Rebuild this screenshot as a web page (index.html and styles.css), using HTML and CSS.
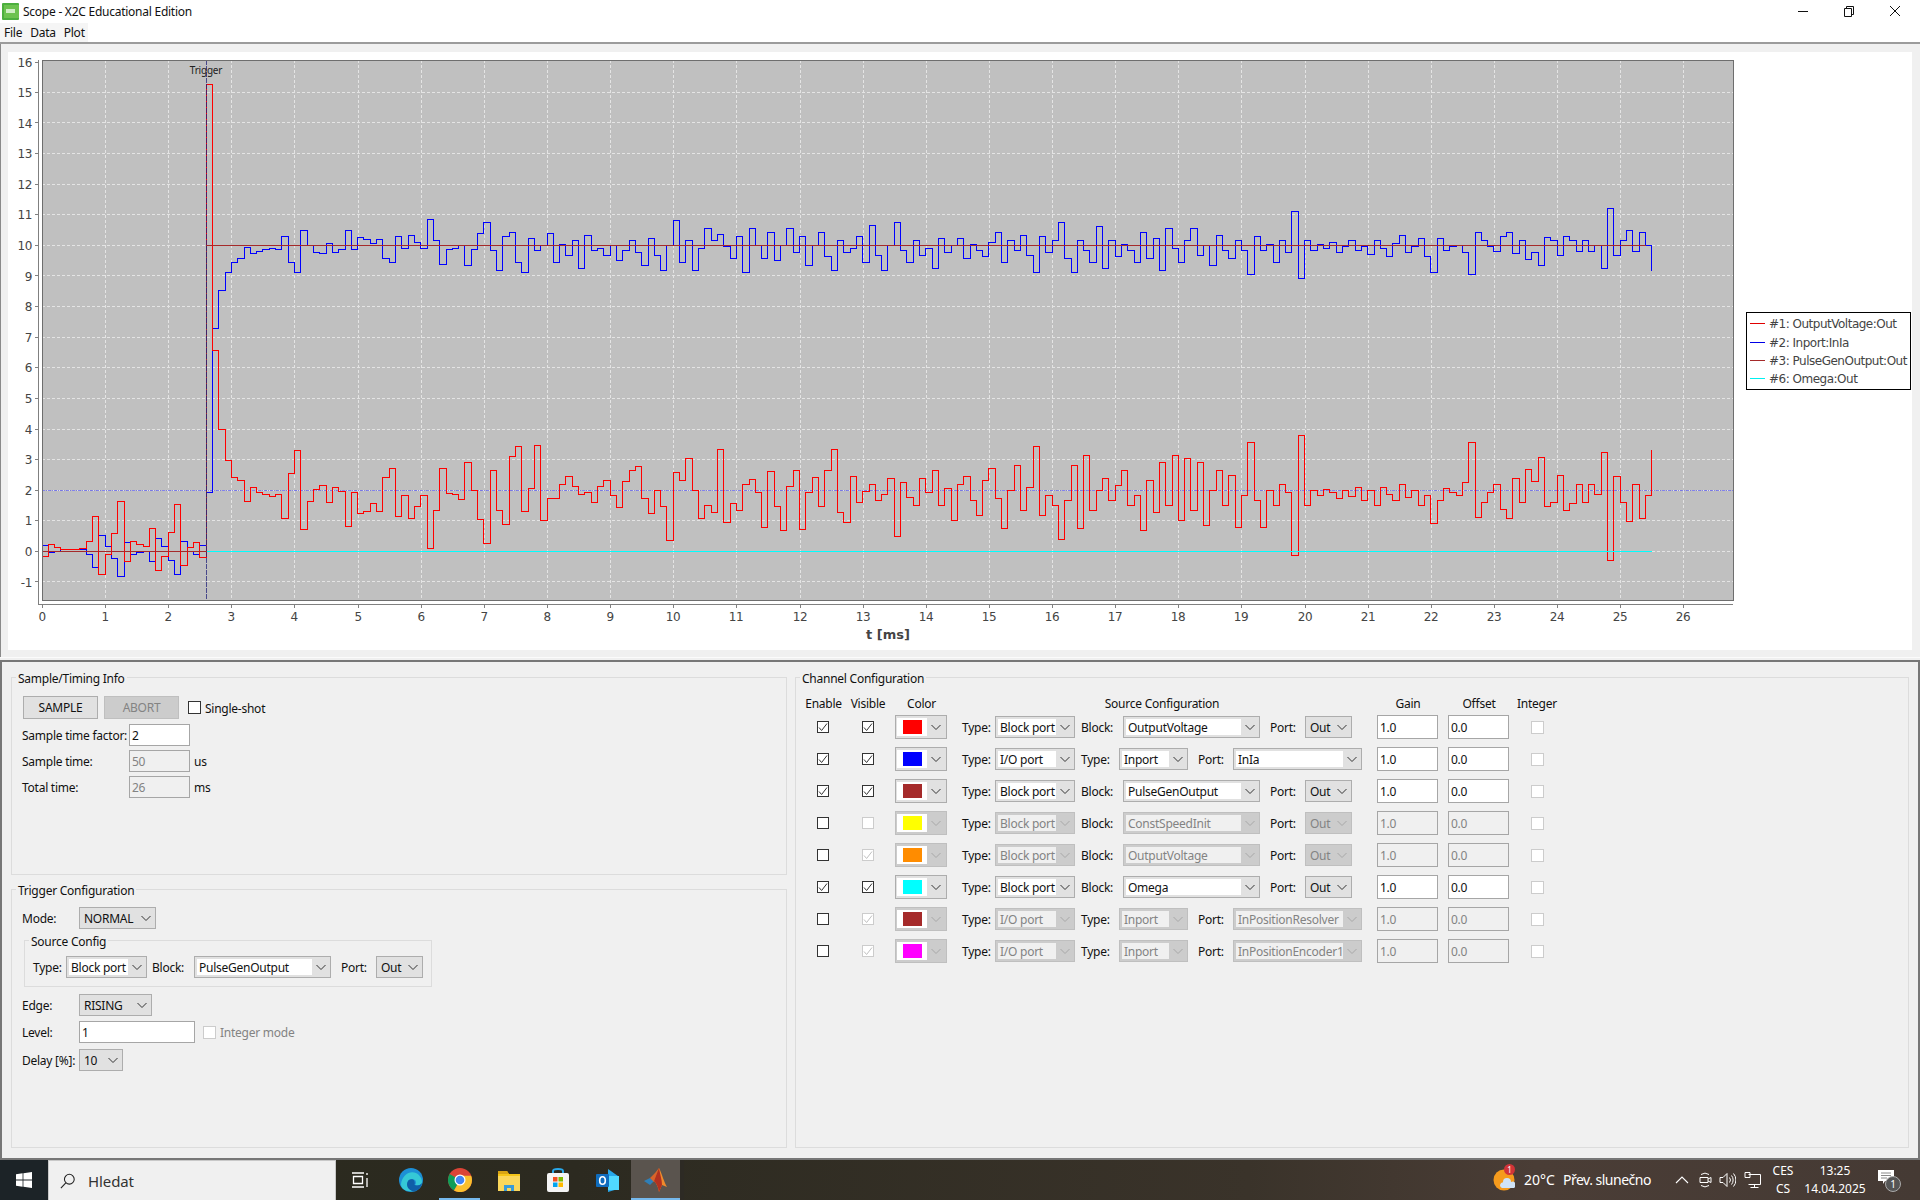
FILE: index.html
```html
<!DOCTYPE html>
<html lang="cs">
<head>
<meta charset="utf-8">
<title>Scope - X2C Educational Edition</title>
<link rel="stylesheet" href="styles.css">
</head>
<body>
<svg class="defs" width="0" height="0" aria-hidden="true">
  <symbol id="chev" viewBox="0 0 17 16"><path d="M4 6l4.5 4.5L13 6" fill="none" stroke="currentColor"/></symbol>
  <symbol id="tick" viewBox="0 0 12 12"><path d="M2 6.5l2.6 3L10 2.5" fill="none" stroke="currentColor"/></symbol>
</svg>
<div class="app">
  <header class="titlebar">
    <svg class="appicon" viewBox="0 0 17 17"><rect x="0" y="0" width="17" height="17" rx="1" fill="#4caf3e"/><rect x="2" y="2" width="15" height="13" fill="#6cc24f"/><rect x="4" y="6" width="9" height="4" fill="#cfeec4"/></svg>
    <span class="wintitle">Scope - X2C Educational Edition</span>
    <div class="wincontrols">
      <svg class="winbtn" viewBox="0 0 46 20"><path d="M18 10.5h10" stroke="#111" fill="none"/></svg>
      <svg class="winbtn" viewBox="0 0 46 20"><path d="M18.5 7.5h7v8h-7zM20.5 7V5.5h7v8H26" stroke="#111" fill="none"/></svg>
      <svg class="winbtn" viewBox="0 0 46 20"><path d="M18 5l10 10M28 5L18 15" stroke="#111" fill="none"/></svg>
    </div>
  </header>
  <nav class="menubar"><div class="menus"><span>File</span><span>Data</span><span>Plot</span></div></nav>
  <section class="plotpane">
    <svg class="plot" viewBox="8 52 1904 598" width="1904" height="598">
      <rect class="plotbg" x="42" y="60" width="1691" height="540"/>
      <path class="grid" d="M105.5 60V600M168.5 60V600M231.5 60V600M294.5 60V600M358.5 60V600M421.5 60V600M484.5 60V600M547.5 60V600M610.5 60V600M673.5 60V600M736.5 60V600M800.5 60V600M863.5 60V600M926.5 60V600M989.5 60V600M1052.5 60V600M1115.5 60V600M1178.5 60V600M1241.5 60V600M1305.5 60V600M1368.5 60V600M1431.5 60V600M1494.5 60V600M1557.5 60V600M1620.5 60V600M1683.5 60V600"/>
      <path class="grid" d="M42 92.5H1733M42 122.5H1733M42 153.5H1733M42 184.5H1733M42 214.5H1733M42 245.5H1733M42 275.5H1733M42 306.5H1733M42 337.5H1733M42 367.5H1733M42 398.5H1733M42 429.5H1733M42 459.5H1733M42 490.5H1733M42 520.5H1733M42 551.5H1733M42 581.5H1733"/>
      <path class="level" d="M42 490.5H1733"/>
      <g transform="translate(42 0) scale(6.313 1)">
        <path class="trace blue" d="M0 545h1V552h1V551h1V549h4V554h1V567h1V535h1V546h1V558h1V576h1V542h1V554h1V552h1V551h1V561h1V538h1V546h1V560h1V574h1V541h1V551h1V554h1V545h1V492h1V328h1V290h1V272h1V262h1V258h1V247h1V253h1V251h1V249h1V248h1V249h1V236h1V262h1V272h1V230h1V245h1V252h1V253h1V243h1V252h1V249h1V230h1V249h1V237h1V239h1V243h1V239h1V258h1V262h1V236h1V248h1V235h1V242h1V248h1V219h1V240h1V264h1V249h1V248h1V245h1V265h1V249h1V233h1V222h1V250h1V270h1V236h1V232h1V262h1V272h1V238h1V250h1V245h1V233h1V262h1V244h1V255h1V240h1V268h1V235h1V250h1V248h1V255h1V245h1V260h1V250h1V240h1V252h1V265h1V238h1V255h1V270h1V245h1V220h1V262h1V240h1V270h1V248h1V228h1V240h1V234h1V246h1V258h1V236h1V272h1V228h1V245h1V258h1V232h1V260h1V245h1V228h1V252h1V236h1V265h1V245h1V232h1V256h1V270h1V240h1V252h1V248h1V236h1V262h1V225h1V255h1V270h1V245h1V222h1V250h1V262h1V240h1V255h1V248h1V268h1V238h1V252h1V245h1V238h1V258h1V244h1V250h1V256h1V242h1V232h1V262h1V240h1V250h1V235h1V255h1V272h1V236h1V252h1V240h1V222h1V258h1V272h1V240h1V250h1V262h1V226h1V268h1V240h1V256h1V244h1V250h1V262h1V232h1V258h1V238h1V270h1V228h1V248h1V262h1V240h1V228h1V255h1V245h1V265h1V235h1V250h1V258h1V240h1V250h1V274h1V236h1V250h1V244h1V262h1V240h1V252h1V211h1V278h1V240h1V250h1V244h1V248h1V242h1V252h1V246h1V240h1V250h1V246h1V254h1V240h1V248h1V256h1V243h1V235h1V252h1V246h1V238h1V256h1V272h1V238h1V250h1V246h1V245h1V252h1V274h1V232h1V240h1V246h1V251h1V236h1V232h1V253h1V240h1V259h1V252h1V265h1V237h1V240h1V255h1V236h1V240h1V251h1V240h1V251h1V245h1V268h1V208h1V255h1V240h1V230h1V251h1V232h1V245h1V271"/>
        <path class="trace red" d="M0 556h1V544h1V547h1V549h3V548h1V541h1V516h1V574h1V554h1V533h1V501h1V561h1V541h1V544h1V546h1V528h1V570h1V556h1V532h1V504h1V565h1V547h1V542h1V557h1V84h1V350h1V429h1V460h1V477h1V480h1V501h1V487h1V492h1V494h1V496h1V494h1V518h1V473h1V450h1V529h1V501h1V489h1V485h1V502h1V487h1V491h1V526h1V492h1V513h1V511h1V503h1V511h1V477h1V468h1V516h1V495h1V518h1V506h1V495h1V548h1V510h1V468h1V493h1V494h1V499h1V462h1V490h1V519h1V543h1V470h1V510h1V524h1V456h1V446h1V511h1V488h1V445h1V520h1V498h1V498h1V484h1V476h1V486h1V494h1V492h1V502h1V486h1V480h1V495h1V507h1V481h1V470h1V466h1V498h1V513h1V490h1V506h1V540h1V472h1V480h1V458h1V490h1V518h1V505h1V512h1V449h1V522h1V503h1V510h1V484h1V479h1V492h1V527h1V471h1V506h1V530h1V486h1V470h1V529h1V492h1V477h1V506h1V470h1V449h1V512h1V522h1V476h1V502h1V491h1V484h1V500h1V494h1V478h1V536h1V482h1V497h1V505h1V478h1V492h1V470h1V505h1V488h1V520h1V484h1V476h1V500h1V515h1V480h1V468h1V498h1V528h1V490h1V465h1V510h1V487h1V446h1V515h1V495h1V505h1V539h1V500h1V465h1V528h1V455h1V510h1V490h1V478h1V500h1V485h1V470h1V505h1V495h1V530h1V480h1V512h1V462h1V505h1V455h1V520h1V458h1V510h1V462h1V525h1V490h1V470h1V505h1V475h1V527h1V495h1V442h1V500h1V527h1V490h1V505h1V484h1V492h1V555h1V435h1V505h1V490h1V495h1V489h1V492h1V498h1V490h1V496h1V487h1V500h1V490h1V505h1V487h1V494h1V500h1V484h1V497h1V490h1V505h1V495h1V523h1V500h1V488h1V492h1V495h1V482h1V442h1V517h1V502h1V492h1V484h1V509h1V518h1V478h1V502h1V469h1V481h1V457h1V506h1V502h1V475h1V510h1V503h1V484h1V502h1V484h1V494h1V452h1V560h1V476h1V502h1V521h1V484h1V518h1V495h1V450"/>
      </g>
      <path class="trace cyan" d="M206 551.5H1652"/>
      <path class="trace brown" d="M42 551.5H206.5V245.5H1646"/>
      <path class="trigline" d="M206.5 60V600"/>
      <path class="frame" d="M42.5 60.5H1733.5V600.5H42.5Z"/>
      <path class="axis" d="M38.5 60V604M35 62.5h3M35 92.5h3M35 122.5h3M35 153.5h3M35 184.5h3M35 214.5h3M35 245.5h3M35 275.5h3M35 306.5h3M35 337.5h3M35 367.5h3M35 398.5h3M35 429.5h3M35 459.5h3M35 490.5h3M35 520.5h3M35 551.5h3M35 581.5h3"/>
      <path class="axis" d="M38 604.5H1733M42.5 604v4M105.5 604v4M168.5 604v4M231.5 604v4M294.5 604v4M358.5 604v4M421.5 604v4M484.5 604v4M547.5 604v4M610.5 604v4M673.5 604v4M736.5 604v4M800.5 604v4M863.5 604v4M926.5 604v4M989.5 604v4M1052.5 604v4M1115.5 604v4M1178.5 604v4M1241.5 604v4M1305.5 604v4M1368.5 604v4M1431.5 604v4M1494.5 604v4M1557.5 604v4M1620.5 604v4M1683.5 604v4"/>
      <text class="trig" x="206" y="74">Trigger</text>
      <g class="ylab">
        <text x="32" y="67">16</text><text x="32" y="97">15</text><text x="32" y="128">14</text><text x="32" y="158">13</text><text x="32" y="189">12</text><text x="32" y="219">11</text><text x="32" y="250">10</text><text x="32" y="281">9</text><text x="32" y="311">8</text><text x="32" y="342">7</text><text x="32" y="372">6</text><text x="32" y="403">5</text><text x="32" y="434">4</text><text x="32" y="464">3</text><text x="32" y="495">2</text><text x="32" y="525">1</text><text x="32" y="556">0</text><text x="32" y="587">-1</text>
      </g>
      <g class="xlab">
        <text x="42" y="621">0</text><text x="105" y="621">1</text><text x="168" y="621">2</text><text x="231" y="621">3</text><text x="294" y="621">4</text><text x="358" y="621">5</text><text x="421" y="621">6</text><text x="484" y="621">7</text><text x="547" y="621">8</text><text x="610" y="621">9</text><text x="673" y="621">10</text><text x="736" y="621">11</text><text x="800" y="621">12</text><text x="863" y="621">13</text><text x="926" y="621">14</text><text x="989" y="621">15</text><text x="1052" y="621">16</text><text x="1115" y="621">17</text><text x="1178" y="621">18</text><text x="1241" y="621">19</text><text x="1305" y="621">20</text><text x="1368" y="621">21</text><text x="1431" y="621">22</text><text x="1494" y="621">23</text><text x="1557" y="621">24</text><text x="1620" y="621">25</text><text x="1683" y="621">26</text>
      </g>
      <text class="xtitle" x="888" y="639">t [ms]</text>
      <rect class="legbox" x="1746.5" y="312.5" width="164" height="77"/>
      <path class="trace" stroke="#e00000" d="M1750 323.5h15"/><path class="trace" stroke="#0000e6" d="M1750 342.5h15"/><path class="trace" stroke="#a52a2a" d="M1750 360.5h15"/><path class="trace" stroke="#00f0f0" d="M1750 378.5h15"/>
      <g class="legtext">
        <text x="1769" y="328">#1: OutputVoltage:Out</text><text x="1769" y="347">#2: Inport:InIa</text><text x="1769" y="365">#3: PulseGenOutput:Out</text><text x="1769" y="383">#6: Omega:Out</text>
      </g>
    </svg>
  </section>
  <div class="divider"></div>
  <main class="config">
    <div class="leftcol">
      <fieldset class="group g-sample">
        <legend>Sample/Timing Info</legend>
        <div class="form">
          <div class="btnrow"><div class="btn">SAMPLE</div><div class="btn off">ABORT</div><div class="cb dark"></div><span class="cblabel">Single-shot</span></div>
          <div class="frow r1"><span class="flabel lw107">Sample time factor:</span><div class="inp w61">2</div></div>
          <div class="frow r2"><span class="flabel lw107">Sample time:</span><div class="inp w61 dis">50</div><span class="unit">us</span></div>
          <div class="frow r2"><span class="flabel lw107">Total time:</span><div class="inp w61 dis">26</div><span class="unit">ms</span></div>
        </div>
      </fieldset>
      <fieldset class="group g-trigger">
        <legend>Trigger Configuration</legend>
        <div class="form trg">
          <div class="frow"><span class="flabel lw57">Mode:</span><div class="sel plain w77"><span class="val">NORMAL</span><svg class="chev"><use href="#chev"/></svg></div></div>
          <fieldset class="group g-source">
            <legend>Source Config</legend>
            <div class="srcrow">
              <span class="lb lb41">Type:</span><div class="sel w81"><span class="val">Block port</span><svg class="chev"><use href="#chev"/></svg></div>
              <span class="lb lb47">Block:</span><div class="sel w137"><span class="val">PulseGenOutput</span><svg class="chev"><use href="#chev"/></svg></div>
              <span class="lb lb45">Port:</span><div class="sel plain w47"><span class="val">Out</span><svg class="chev"><use href="#chev"/></svg></div>
            </div>
          </fieldset>
          <div class="frow r-edge"><span class="flabel lw57">Edge:</span><div class="sel plain w73"><span class="val">RISING</span><svg class="chev"><use href="#chev"/></svg></div></div>
          <div class="frow r-level"><span class="flabel lw57">Level:</span><div class="inp w116">1</div><div class="cb light ml8"></div><span class="cblabel mute">Integer mode</span></div>
          <div class="frow r-delay"><span class="flabel lw57">Delay [%]:</span><div class="sel plain w44"><span class="val">10</span><svg class="chev"><use href="#chev"/></svg></div></div>
        </div>
      </fieldset>
    </div>
    <fieldset class="group g-channel">
      <legend>Channel Configuration</legend>
      <div class="chead"><span class="h1">Enable</span><span class="h2">Visible</span><span class="h3">Color</span><span class="h4">Source Configuration</span><span class="h5">Gain</span><span class="h6">Offset</span><span class="h7">Integer</span></div>

      <div class="crow">
        <div class="cb dark c-en"><svg class="tickic"><use href="#tick"/></svg></div><div class="cb dark c-vis"><svg class="tickic"><use href="#tick"/></svg></div>
        <div class="colsel"><div class="colval"><i class="sw sw-red"></i></div><svg class="chev"><use href="#chev"/></svg></div>
        <span class="lb lb48">Type:</span><div class="sel w80"><span class="val">Block port</span><svg class="chev"><use href="#chev"/></svg></div>
        <span class="lb lb48b">Block:</span><div class="sel w137"><span class="val">OutputVoltage</span><svg class="chev"><use href="#chev"/></svg></div>
        <span class="lb lb45">Port:</span><div class="sel plain w47"><span class="val">Out</span><svg class="chev"><use href="#chev"/></svg></div>
        <div class="inp gain g25">1.0</div><div class="inp gain o10">0.0</div><div class="cb light c-int"></div>
      </div>
      <div class="crow">
        <div class="cb dark c-en"><svg class="tickic"><use href="#tick"/></svg></div><div class="cb dark c-vis"><svg class="tickic"><use href="#tick"/></svg></div>
        <div class="colsel"><div class="colval"><i class="sw sw-blue"></i></div><svg class="chev"><use href="#chev"/></svg></div>
        <span class="lb lb48">Type:</span><div class="sel w80"><span class="val">I/O port</span><svg class="chev"><use href="#chev"/></svg></div>
        <span class="lb lb44">Type:</span><div class="sel w69"><span class="val">Inport</span><svg class="chev"><use href="#chev"/></svg></div>
        <span class="lb lb45">Port:</span><div class="sel w129"><span class="val">InIa</span><svg class="chev"><use href="#chev"/></svg></div>
        <div class="inp gain g15">1.0</div><div class="inp gain o10">0.0</div><div class="cb light c-int"></div>
      </div>
      <div class="crow">
        <div class="cb dark c-en"><svg class="tickic"><use href="#tick"/></svg></div><div class="cb dark c-vis"><svg class="tickic"><use href="#tick"/></svg></div>
        <div class="colsel"><div class="colval"><i class="sw sw-brown"></i></div><svg class="chev"><use href="#chev"/></svg></div>
        <span class="lb lb48">Type:</span><div class="sel w80"><span class="val">Block port</span><svg class="chev"><use href="#chev"/></svg></div>
        <span class="lb lb48b">Block:</span><div class="sel w137"><span class="val">PulseGenOutput</span><svg class="chev"><use href="#chev"/></svg></div>
        <span class="lb lb45">Port:</span><div class="sel plain w47"><span class="val">Out</span><svg class="chev"><use href="#chev"/></svg></div>
        <div class="inp gain g25">1.0</div><div class="inp gain o10">0.0</div><div class="cb light c-int"></div>
      </div>
      <div class="crow off">
        <div class="cb dark c-en"></div><div class="cb light c-vis"></div>
        <div class="colsel"><div class="colval"><i class="sw sw-yellow"></i></div><svg class="chev"><use href="#chev"/></svg></div>
        <span class="lb lb48">Type:</span><div class="sel w80"><span class="val">Block port</span><svg class="chev"><use href="#chev"/></svg></div>
        <span class="lb lb48b">Block:</span><div class="sel w137"><span class="val">ConstSpeedInit</span><svg class="chev"><use href="#chev"/></svg></div>
        <span class="lb lb45">Port:</span><div class="sel plain w47"><span class="val">Out</span><svg class="chev"><use href="#chev"/></svg></div>
        <div class="inp gain g25">1.0</div><div class="inp gain o10">0.0</div><div class="cb light c-int"></div>
      </div>
      <div class="crow off">
        <div class="cb dark c-en"></div><div class="cb light c-vis"><svg class="tickic"><use href="#tick"/></svg></div>
        <div class="colsel"><div class="colval"><i class="sw sw-orange"></i></div><svg class="chev"><use href="#chev"/></svg></div>
        <span class="lb lb48">Type:</span><div class="sel w80"><span class="val">Block port</span><svg class="chev"><use href="#chev"/></svg></div>
        <span class="lb lb48b">Block:</span><div class="sel w137"><span class="val">OutputVoltage</span><svg class="chev"><use href="#chev"/></svg></div>
        <span class="lb lb45">Port:</span><div class="sel plain w47"><span class="val">Out</span><svg class="chev"><use href="#chev"/></svg></div>
        <div class="inp gain g25">1.0</div><div class="inp gain o10">0.0</div><div class="cb light c-int"></div>
      </div>
      <div class="crow">
        <div class="cb dark c-en"><svg class="tickic"><use href="#tick"/></svg></div><div class="cb dark c-vis"><svg class="tickic"><use href="#tick"/></svg></div>
        <div class="colsel"><div class="colval"><i class="sw sw-cyan"></i></div><svg class="chev"><use href="#chev"/></svg></div>
        <span class="lb lb48">Type:</span><div class="sel w80"><span class="val">Block port</span><svg class="chev"><use href="#chev"/></svg></div>
        <span class="lb lb48b">Block:</span><div class="sel w137"><span class="val">Omega</span><svg class="chev"><use href="#chev"/></svg></div>
        <span class="lb lb45">Port:</span><div class="sel plain w47"><span class="val">Out</span><svg class="chev"><use href="#chev"/></svg></div>
        <div class="inp gain g25">1.0</div><div class="inp gain o10">0.0</div><div class="cb light c-int"></div>
      </div>
      <div class="crow off">
        <div class="cb dark c-en"></div><div class="cb light c-vis"><svg class="tickic"><use href="#tick"/></svg></div>
        <div class="colsel"><div class="colval"><i class="sw sw-brown"></i></div><svg class="chev"><use href="#chev"/></svg></div>
        <span class="lb lb48">Type:</span><div class="sel w80"><span class="val">I/O port</span><svg class="chev"><use href="#chev"/></svg></div>
        <span class="lb lb44">Type:</span><div class="sel w69"><span class="val">Inport</span><svg class="chev"><use href="#chev"/></svg></div>
        <span class="lb lb45">Port:</span><div class="sel w129"><span class="val">InPositionResolver</span><svg class="chev"><use href="#chev"/></svg></div>
        <div class="inp gain g15">1.0</div><div class="inp gain o10">0.0</div><div class="cb light c-int"></div>
      </div>
      <div class="crow off">
        <div class="cb dark c-en"></div><div class="cb light c-vis"><svg class="tickic"><use href="#tick"/></svg></div>
        <div class="colsel"><div class="colval"><i class="sw sw-magenta"></i></div><svg class="chev"><use href="#chev"/></svg></div>
        <span class="lb lb48">Type:</span><div class="sel w80"><span class="val">I/O port</span><svg class="chev"><use href="#chev"/></svg></div>
        <span class="lb lb44">Type:</span><div class="sel w69"><span class="val">Inport</span><svg class="chev"><use href="#chev"/></svg></div>
        <span class="lb lb45">Port:</span><div class="sel w129"><span class="val">InPositionEncoder1</span><svg class="chev"><use href="#chev"/></svg></div>
        <div class="inp gain g15">1.0</div><div class="inp gain o10">0.0</div><div class="cb light c-int"></div>
      </div>
    </fieldset>
  </main>
  <footer class="taskbar">
    <div class="start"><svg class="winlogo" viewBox="0 0 16 16"><path fill="#fff" d="M0 2.2l6.6-.9v6.3H0zM7.4 1.2L16 0v7.6H7.4zM0 8.4h6.6v6.3L0 13.8zM7.4 8.4H16V16l-8.6-1.2z"/></svg></div>
    <div class="search">
      <svg class="lens" viewBox="0 0 18 18"><circle cx="10.5" cy="7" r="5.5" fill="none" stroke="#222" stroke-width="1.2"/><path d="M6.5 11L1 17" stroke="#222" stroke-width="1.2"/></svg>
      <span>Hledat</span>
    </div>
    <div class="tasks">
      <div class="task"><svg class="ic" viewBox="0 0 24 24"><path d="M2 5h12M2 19h12M3.500 8.500h9v7h-9z" fill="none" stroke="#fff" stroke-width="1.300"/><path d="M17 5v2M17 10v9" stroke="#fff" stroke-width="1.300"/></svg></div>
      <div class="task"><svg class="ic" viewBox="0 0 24 24"><circle cx="12" cy="12" r="12" fill="#1d8fd6"/><path d="M2 16C3 7 11 2 17 5c4 2 6 6 6 9 0 3-4 4-7 3 2-2 1-6-3-6-5 0-7 7 1 12C7 24 2 21 2 16z" fill="#35c8d6"/><path d="M13 23c-5-2-6-7-4-10 1-1.500 3-2.300 5-1.500 2 1 2 4 1.500 5.500 2 1 6 .5 7.500-2-1 5-5 9-10 8z" fill="#0f5fa8"/></svg></div>
      <div class="task under"><svg class="ic" viewBox="0 0 24 24"><circle cx="12" cy="12" r="12" fill="#db4437"/><path d="M12 12L1.600 6A12 12 0 0 0 6 22.400z" fill="#0f9d58"/><path d="M12 12l-6 10.400A12 12 0 0 0 24 12c0-1.500-.3-3-.8-4.300H12z" fill="#fbc02d"/><circle cx="12" cy="12" r="5.500" fill="#fff"/><circle cx="12" cy="12" r="4.300" fill="#4285f4"/></svg></div>
      <div class="task"><svg class="ic" viewBox="0 0 24 24"><path d="M1 3h9l2 3h11v17H1z" fill="#f5c518"/><path d="M1 3h9l2 3H1z" fill="#d9a514"/><rect x="1" y="8" width="22" height="15" fill="#fbd75b"/><path d="M7 23v-6h10v6h-3v-3h-4v3z" fill="#3a9bd9"/></svg></div>
      <div class="task"><svg class="ic" viewBox="0 0 24 24"><path d="M7 6V3a5 2 0 0 1 10 0v3" fill="none" stroke="#28a8ea" stroke-width="2"/><rect x="1" y="5" width="22" height="19" rx="2" fill="#f4f4f4"/><rect x="7" y="9" width="4.500" height="4.500" fill="#f25022"/><rect x="12.500" y="9" width="4.500" height="4.500" fill="#7fba00"/><rect x="7" y="14.500" width="4.500" height="4.500" fill="#00a4ef"/><rect x="12.500" y="14.500" width="4.500" height="4.500" fill="#ffb900"/></svg></div>
      <div class="task"><svg class="ic" viewBox="0 0 24 24"><path d="M13 1l10 7v13l-10 3z" fill="#28a8ea"/><path d="M13 8h11v14H13z" fill="#50d9ff"/><rect x="1" y="6" width="13" height="13" rx="1" fill="#0f6cbd"/><ellipse cx="7.500" cy="12.500" rx="2.800" ry="3.800" fill="none" stroke="#fff" stroke-width="1.600"/></svg></div>
      <div class="task active under"><svg class="ic" viewBox="0 0 24 24"><path d="M0 13l6-3 4 3-4 4z" fill="#2f7fb8"/><path d="M6 10l5-5 4-5-5 14z" fill="#d9642a"/><path d="M15 0c3 6 5 14 8 19l-5-2-3 7c-1-5-2-8-5-11z" fill="#ef8a2c"/><path d="M15 0c1 6 3 12 3 17l-3 7c-1-5-2-8-5-11z" fill="#b3311f"/></svg></div>
      <div class="sliver"></div>
    </div>
    <div class="tray">
      <div class="weather"><svg class="wicon" viewBox="0 0 22 22"><circle cx="11" cy="11" r="10.500" fill="#f59b1d"/><path d="M9 19a3 3 0 0 1 1-5.800 4 4 0 0 1 8-.2 3 3 0 0 1 3 6z" fill="#cfe3f7"/></svg><span class="wbadge">1</span></div>
      <span class="temp">20°C</span>
      <span class="wtext">Přev. slunečno</span>
      <svg class="tic t-chev" viewBox="0 0 14 14"><path d="M1 10l6-6 6 6" fill="none" stroke="#fff" stroke-width="1.100"/></svg>
      <svg class="tic t-meet" viewBox="0 0 14 18"><path d="M2 3.500a7 7 0 0 1 8 0M2 14.500a7 7 0 0 0 8 0M1 6.500h8v5H1zM9 8l3-1.500v5L9 10" fill="none" stroke="#fff"/></svg>
      <svg class="tic t-vol" viewBox="0 0 17 18"><path d="M1 6.500h3l4-4v13l-4-4H1zM10.500 6.500a4 4 0 0 1 0 5M12.500 4.500a7 7 0 0 1 0 9M14.500 2.500a10 10 0 0 1 0 13" fill="none" stroke="#fff"/></svg>
      <svg class="tic t-net" viewBox="0 0 17 18"><path d="M4.500 3.500h12v10h-12M1 1.500h5v5H1zM10.500 13.500v3M6.500 16.500h8" fill="none" stroke="#fff"/></svg>
      <div class="clockcol lang"><span>CES</span><span>CS</span></div>
      <div class="clockcol clock"><span>13:25</span><span>14.04.2025</span></div>
      <div class="notif"><svg class="nicon" viewBox="0 0 16 14"><path d="M0 0h16v11H7l-2 3v-3H0z" fill="#fff"/><path d="M3 3h10M3 5.500h10M3 8h6" stroke="#888"/></svg><span class="nbadge">1</span></div>
    </div>
  </footer>
</div>
</body>
</html>
```
FILE: styles.css
```css
* { box-sizing: border-box; }
html, body { margin: 0; padding: 0; }
body { width: 1920px; height: 1200px; overflow: hidden; background: #f0f0f0; color: #111; font: 12px/16px "Noto Sans", "Liberation Sans", sans-serif; letter-spacing: -0.25px; }
.defs { position: absolute; }
.app { display: flex; flex-direction: column; height: 1200px; }

.titlebar { height: 23px; background: #fff; display: flex; align-items: center; padding-left: 2px; }
.appicon { width: 17px; height: 17px; }
.wintitle { margin-left: 4px; }
.wincontrols { margin-left: auto; display: flex; margin-right: 2px; }
.winbtn { width: 46px; height: 20px; margin-top: -1px; }

.menubar { height: 21px; background: #fff; border-bottom: 2px solid #9b9b9b; }
.menus { width: 88px; height: 19px; background: #f5f5f5; display: flex; align-items: center; padding-left: 4px; gap: 8px; }

.plotpane { height: 613px; padding: 8px 8px 7px 7px; border-left: 1px solid #8a8a8a; }
.plot { display: block; background: #fff; }
.plotbg { fill: #c0c0c0; }
.grid { fill: none; stroke: #e4e4e4; stroke-dasharray: 3 2; stroke-width: 1; shape-rendering: crispEdges; }
.level { fill: none; stroke: #5a5af0; stroke-opacity: .7; stroke-dasharray: 3 1 1 1; stroke-width: 1; shape-rendering: crispEdges; }
.trace { fill: none; stroke-width: 1; vector-effect: non-scaling-stroke; shape-rendering: crispEdges; }
.blue { stroke: #0000ff; }
.red { stroke: #ff0000; }
.cyan { stroke: #00ffff; }
.brown { stroke: #a52a2a; }
.trigline { fill: none; stroke: #20207a; stroke-opacity: .75; stroke-dasharray: 5 1; shape-rendering: crispEdges; }
.frame { fill: none; stroke: #6e6e6e; stroke-width: 1; shape-rendering: crispEdges; }
.axis { fill: none; stroke: #808080; stroke-width: 1; shape-rendering: crispEdges; }
.trig { font: 10px "Noto Sans", sans-serif; letter-spacing: -0.2px; text-anchor: middle; fill: #222; }
.ylab text { font: 12px "DejaVu Sans", sans-serif; letter-spacing: -0.4px; text-anchor: end; fill: #444; }
.xlab text { font: 12px "DejaVu Sans", sans-serif; letter-spacing: -0.4px; text-anchor: middle; fill: #444; }
.xtitle { font: bold 13px "DejaVu Sans", sans-serif; letter-spacing: 0; text-anchor: middle; fill: #444; }
.legbox { fill: #fff; stroke: #000; stroke-width: 1; shape-rendering: crispEdges; }
.legtext text { font: 12px "DejaVu Sans", sans-serif; letter-spacing: -0.5px; fill: #444; }

.divider { height: 5px; border-top: 1px solid #fbfbfb; border-bottom: 2px solid #777; background: #f0f0f0; }
.config { height: 498px; display: grid; grid-template-columns: 776px 1114px; column-gap: 8px; align-content: start; padding: 5px 0 0 9px; border-left: 2px solid #777; border-right: 2px solid #777; border-bottom: 2px solid #777; }
.leftcol { display: flex; flex-direction: column; gap: 4px; }
.group { border: 1px solid #dcdcdc; margin: 0; padding: 0; min-width: 0; }
.group > legend { margin-left: 4px; padding: 4px 2px 0; line-height: 16px; }
.g-sample { height: 208px; }
.g-trigger { height: 269px; }
.g-channel { height: 481px; }

.form { padding: 9px 0 0 10px; }
.btnrow { display: flex; align-items: center; margin-left: 1px; }
.btn { width: 75px; height: 23px; margin-right: 6px; background: #e1e1e1; border: 1px solid #adadad; display: flex; align-items: center; justify-content: center; }
.btn.off { background: #ccc; border-color: #bfbfbf; color: #838383; margin-right: 9px; }
.cb { width: 13px; height: 13px; flex: none; background: #fff; border: 1px solid #333; display: flex; align-items: center; justify-content: center; }
.cb.light { border-color: #ccc; }
.cblabel { margin-left: 4px; padding-top: 2px; }
.cblabel.mute { color: #838383; }
.ml8 { margin-left: 8px; }
.frow { display: flex; align-items: center; }
.r1 { margin-top: 5px; }
.r2 { margin-top: 4px; }
.flabel { flex: none; padding-top: 2px; }
.lw107 { width: 107px; }
.lw57 { width: 57px; }
.inp { height: 22px; flex: none; background: #fff; border: 1px solid #a6a6a6; padding: 2px 0 0 2px; display: flex; align-items: center; }
.inp.dis, .off .inp { background: #f0f0f0; color: #838383; }
.w61 { width: 61px; }
.w116 { width: 116px; }
.unit { margin-left: 4px; padding-top: 2px; }

.sel { height: 22px; flex: none; display: flex; align-items: center; background: #e1e1e1; border: 1px solid #adadad; padding: 2px 0 2px 2px; }
.sel .val { flex: 1; min-width: 0; height: 16px; background: #fff; padding: 1px 0 0 2px; white-space: nowrap; overflow: hidden; }
.sel.plain .val { background: transparent; }
.chev { width: 18px; height: 16px; flex: none; color: #333; }
.off .sel { background: #ccc; border-color: #bfbfbf; color: #838383; }
.off .sel .val { background: #f0f0f0; }
.off .sel.plain .val { background: transparent; }
.off .chev { color: #a8a8a8; }
.w44 { width: 44px; } .w47 { width: 47px; } .w69 { width: 69px; } .w73 { width: 73px; } .w77 { width: 77px; } .w80 { width: 80px; } .w81 { width: 81px; } .w129 { width: 129px; } .w137 { width: 137px; }

.trg { padding-top: 8px; }
.g-source { width: 408px; height: 57px; margin: 1px 0 0 2px; }
.srcrow { display: flex; align-items: center; margin-top: 6px; }
.lb { flex: none; white-space: nowrap; padding-top: 2px; }
.lb41 { width: 41px; padding-left: 8px; }
.lb47 { width: 47px; padding-left: 5px; }
.lb45 { width: 45px; padding-left: 10px; }
.lb48 { width: 48px; padding-left: 15px; }
.lb48b { width: 48px; padding-left: 6px; }
.lb44 { width: 44px; padding-left: 6px; }
.r-edge { margin-top: 7px; }
.r-level { margin-top: 5px; }
.r-delay { margin-top: 6px; }

.chead { display: flex; margin-top: 9px; text-align: center; }
.h1 { width: 45px; margin-left: 5px; }
.h2 { width: 44px; }
.h3 { width: 63px; }
.h4 { width: 418px; }
.h5 { width: 62px; margin-left: 6px; }
.h6 { width: 62px; margin-left: 9px; }
.h7 { width: 54px; }
.crow { display: flex; align-items: center; height: 24px; margin-top: 8px; }
.chead + .crow { margin-top: 3px; }
.c-en { width: 12px; height: 12px; margin-left: 21px; }
.c-vis { width: 12px; height: 12px; margin-left: 33px; }
.c-int { margin-left: 22px; }
.tickic { width: 12px; height: 12px; flex: none; color: #333; margin: -1px; }
.off .tickic { color: #c0c0c0; }
.colsel { width: 52px; height: 24px; flex: none; margin-left: 21px; display: flex; align-items: center; background: #e1e1e1; border: 1px solid #adadad; padding-left: 1px; }
.off .colsel { background: #ccc; border-color: #bfbfbf; }
.colval { width: 30px; height: 18px; flex: none; background: #fff; display: flex; align-items: center; justify-content: center; }
.sw { display: block; width: 19px; height: 14px; }
.sw-red { background: #ff0000; } .sw-blue { background: #0000ff; } .sw-brown { background: #a52a2a; } .sw-yellow { background: #ffff00; } .sw-orange { background: #ff8c00; } .sw-cyan { background: #00ffff; } .sw-magenta { background: #ff00ff; }
.gain { width: 61px; height: 24px; }
.g25 { margin-left: 25px; }
.g15 { margin-left: 15px; }
.o10 { margin-left: 10px; }

.taskbar { height: 40px; flex: none; display: flex; background: linear-gradient(90deg, #2a2a1e 0, #2c2a20 30%, #3a332a 65%, #4a3d36 80%, #453a34 100%); color: #fff; letter-spacing: 0; }
.start { width: 48px; background: #1c2327; display: flex; align-items: center; justify-content: center; }
.winlogo { width: 16px; height: 16px; }
.search { width: 288px; background: #f0f0f0; border: 1px solid #c8c8c8; border-bottom: 0; display: flex; align-items: center; color: #333; font-size: 15px; }
.lens { width: 16px; height: 16px; margin-left: 11px; }
.search span { margin-left: 12px; letter-spacing: -0.1px; }
.tasks { display: flex; margin-left: 1px; }
.task { width: 49px; height: 40px; display: flex; align-items: center; justify-content: center; flex: none; position: relative; }
.task.under::after { content: ""; position: absolute; left: 4px; right: 4px; bottom: 0; height: 2px; background: #76b9ed; }
.task.active { background: #5a544e; }
.task.active.under::after { left: 0; right: 0; }
.ic { width: 24px; height: 24px; }
.sliver { width: 4px; background: #2d2a24; }
.tray { margin-left: auto; display: flex; align-items: center; }
.weather { width: 22px; height: 22px; position: relative; }
.wicon { display: block; width: 22px; height: 22px; }
.wbadge { position: absolute; left: 11px; top: -5px; width: 11px; height: 11px; border-radius: 50%; background: #d13438; font-size: 8px; line-height: 11px; text-align: center; }
.temp { margin-left: 9px; width: 29px; font-size: 14px; white-space: nowrap; }
.wtext { margin-left: 10px; font-size: 14px; width: 88px; white-space: nowrap; letter-spacing: -0.5px; }
.tic { flex: none; }
.t-chev { width: 14px; height: 14px; margin-left: 24px; }
.t-meet { width: 14px; height: 18px; margin-left: 10px; }
.t-vol { width: 17px; height: 18px; margin-left: 6px; }
.t-net { width: 17px; height: 18px; margin-left: 8px; }
.clockcol { display: flex; flex-direction: column; align-items: center; line-height: 18px; }
.lang { width: 24px; margin-left: 10px; }
.clock { width: 56px; margin-left: 12px; }
.notif { width: 24px; height: 24px; margin-left: 15px; margin-right: 18px; position: relative; }
.nicon { display: block; width: 16px; height: 14px; margin-top: 2px; }
.nbadge { position: absolute; left: 7px; top: 8px; width: 16px; height: 16px; border-radius: 50%; background: #555; border: 1px solid #aaa; font-size: 10px; line-height: 14px; text-align: center; }
```
